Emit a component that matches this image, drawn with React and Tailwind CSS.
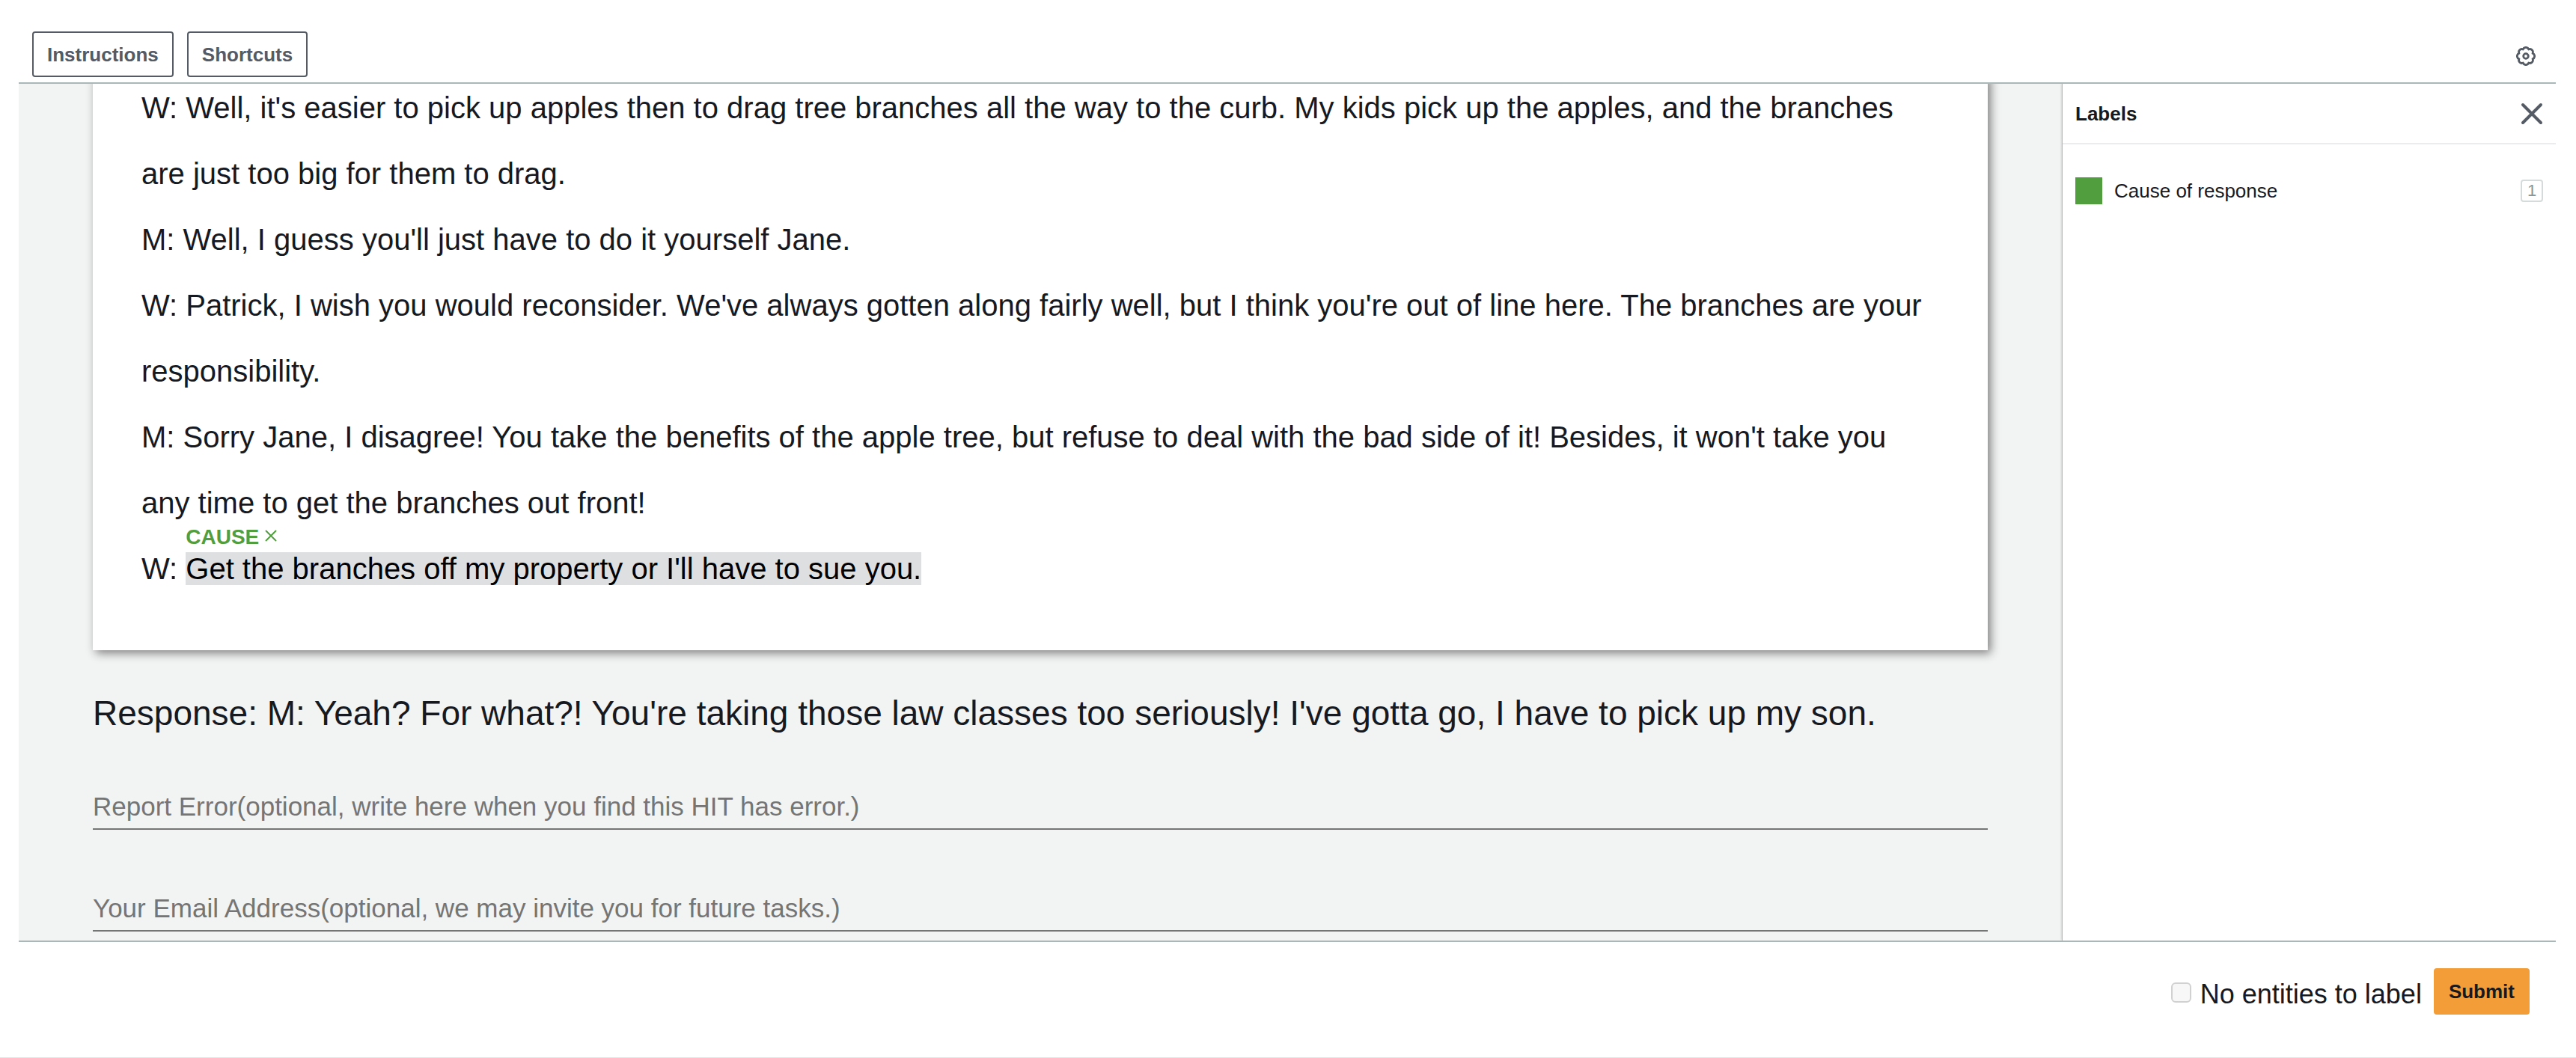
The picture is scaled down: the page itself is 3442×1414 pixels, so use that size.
import React from "react";

const dialogue = [
  "W: Well, it's easier to pick up apples then to drag tree branches all the way to the curb. My kids pick up the apples, and the branches are just too big for them to drag.",
  "M: Well, I guess you'll just have to do it yourself Jane.",
  "W: Patrick, I wish you would reconsider. We've always gotten along fairly well, but I think you're out of line here. The branches are your responsibility.",
  "M: Sorry Jane, I disagree! You take the benefits of the apple tree, but refuse to deal with the bad side of it! Besides, it won't take you any time to get the branches out front!",
];

const labels = [{ name: "Cause of response", color: "bg-[#519e3e]", hotkey: "1" }];

const fields = [
  { id: "error", label: "Report Error(optional, write here when you find this HIT has error.)" },
  { id: "email", label: "Your Email Address(optional, we may invite you for future tasks.)" },
];

const GearIcon = () => (
  <svg viewBox="0 0 26 26" className="w-[26px] h-[26px]" fill="none" stroke="currentColor" strokeWidth="2.8">
    <path
      strokeLinejoin="round"
      d="M9.25 3.95A4 4 0 0 1 16.75 3.95A4 4 0 0 1 22.05 9.25A4 4 0 0 1 22.05 16.75A4 4 0 0 1 16.75 22.05A4 4 0 0 1 9.25 22.05A4 4 0 0 1 3.95 16.75A4 4 0 0 1 3.95 9.25A4 4 0 0 1 9.25 3.95z"
    />
    <circle cx="13" cy="13" r="3.3" />
  </svg>
);

const CloseIcon = () => (
  <svg viewBox="0 0 30 30" className="w-[30px] h-[30px]" fill="none" stroke="currentColor" strokeWidth="4">
    <path strokeLinecap="round" d="M3 3l24 24M27 3L3 27" />
  </svg>
);

const ToolbarButton = ({ children }) => (
  <button
    type="button"
    className="h-[61px] px-[18px] border-2 border-[#545b64] rounded-sm text-[26px] leading-8 font-bold text-[#545b64]"
  >
    {children}
  </button>
);

// Highlighted span with its label floating above
const Entity = ({ tag, children }) => (
  <span className="relative bg-[#dedfe1] text-black">
    <span className="absolute left-0 -top-9 flex items-center gap-2 text-[28px] leading-8 font-bold text-[#519e3e]">
      {tag}
      <button type="button" aria-label="Remove label" className="pb-1">
        <svg viewBox="0 0 16 16" className="w-4 h-4" stroke="currentColor" strokeWidth="2">
          <path d="M1 1l14 14M15 1L1 15" />
        </svg>
      </button>
    </span>
    {children}
  </span>
);

function App() {
  return (
    <div className="h-screen flex flex-col pl-[25px] pr-[27px] bg-white border-b border-[#e5e5e5] font-['Liberation_Sans',Arial,sans-serif] text-[#16191f]">
      {/* Toolbar */}
      <header className="h-28 shrink-0 flex items-end justify-between px-[18px] pb-[7px] border-b-2 border-[#aab7b8]">
        <div className="flex gap-[18px]">
          <ToolbarButton>Instructions</ToolbarButton>
          <ToolbarButton>Shortcuts</ToolbarButton>
        </div>
        <button type="button" aria-label="Settings" className="px-[9px] pb-[15px] text-[#545b64]">
          <GearIcon />
        </button>
      </header>

      <div className="flex-1 min-h-0 flex overflow-hidden">
        {/* Task content */}
        <main className="flex-1 min-w-0 overflow-hidden px-[99px] bg-[#f2f3f3]">
          <div className="-mt-3 px-[65px] pb-[65px] bg-white shadow-[4px_4px_12px_#808080] text-[40px] leading-[88px]">
            {dialogue.map((line) => (
              <p key={line}>{line}</p>
            ))}
            <p>
              W: <Entity tag="CAUSE">Get the branches off my property or I'll have to sue you.</Entity>
            </p>
          </div>
          <h2 className="mt-14 text-[46px] leading-[56px]">
            Response: M: Yeah? For what?! You're taking those law classes too seriously! I've gotta go, I have to pick up my son.
          </h2>
          <div className="mt-14 flex flex-col gap-16">
            {fields.map((field) => (
              <input
                key={field.id}
                type="text"
                aria-label={field.label}
                placeholder={field.label}
                className="w-full h-[72px] pt-3 border-b-2 border-[#757575] bg-transparent text-[35px] outline-none placeholder:text-[#757575]"
              />
            ))}
          </div>
        </main>

        {/* Labels panel */}
        <aside className="w-[660px] shrink-0 bg-white border-l border-[#b5b9ba] shadow-[0_0_3px_#00000040]">
          <div className="h-[81px] flex items-center justify-between px-[17px] border-b-2 border-[#eaeded]">
            <h3 className="text-[26px] leading-8 font-bold">Labels</h3>
            <button type="button" aria-label="Close" className="text-[#545b64]">
              <CloseIcon />
            </button>
          </div>
          <ul className="px-[17px] pt-11">
            {labels.map((label) => (
              <li key={label.name} className="flex items-center text-[26px] leading-9">
                <span className={`w-9 h-9 mr-4 ${label.color}`}></span>
                <span className="flex-1">{label.name}</span>
                <kbd className="w-[30px] h-[30px] flex items-center justify-center border-2 border-[#d5dbdb] rounded-sm font-['Liberation_Sans',Arial,sans-serif] text-[22px] leading-none text-[#879596]">
                  {label.hotkey}
                </kbd>
              </li>
            ))}
          </ul>
        </aside>
      </div>

      {/* Footer */}
      <footer className="h-[156px] shrink-0 flex items-start justify-end gap-4 px-[35px] pt-[35px] border-t-2 border-[#aab7b8]">
        <label className="pt-3 flex items-start gap-3 text-[36px] leading-[46px]">
          <input
            type="checkbox"
            className="appearance-none w-[27px] h-[27px] mt-[7px] border-2 border-[#d1d1d1] rounded-md bg-[#f7f7f7]"
          />
          No entities to label
        </label>
        <button type="submit" className="h-[62px] px-5 rounded-sm bg-[#f29d38] text-[26px] leading-8 font-bold">
          Submit
        </button>
      </footer>
    </div>
  );
}

export default App;
